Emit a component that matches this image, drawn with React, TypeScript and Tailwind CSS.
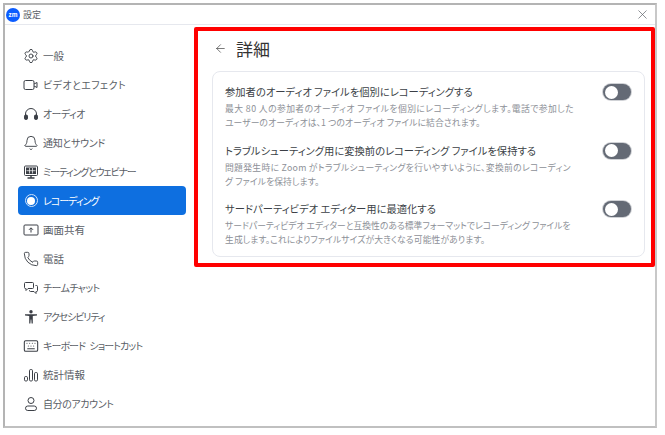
import React from "react";
import { Settings, Bell, Phone, Keyboard, X, ArrowLeft } from "lucide-react";

const I = ({ children }: { children: React.ReactNode }) => (
  <svg viewBox="0 0 16 16" width="16" height="16" fill="none" stroke="currentColor" strokeWidth="1">{children}</svg>
);

const items: [string, string, React.ReactNode][] = [
  ["一般", "text-[10.5px]", <Settings size={16} strokeWidth={1.4} />],
  ["ビデオとエフェクト", "tracking-[0.4px]", <I><rect x="1" y="3.5" width="10" height="9" rx="1.5" /><path d="M11 7l3-1.5v5L11 9" /></I>],
  ["オーディオ", "tracking-[-0.6px]", <I><path d="M2.5 11V8a5.5 5.5 0 0 1 11 0v3" /><rect x="1.5" y="9" width="3" height="4.5" rx="1.2" fill="currentColor" /><rect x="11.5" y="9" width="3" height="4.5" rx="1.2" fill="currentColor" /></I>],
  ["通知とサウンド", "tracking-[-0.3px]", <Bell size={16} strokeWidth={1.4} />],
  ["ミーティングとウェビナー", "tracking-[-1.2px]", <I><rect x="1.5" y="2" width="13" height="9.5" rx="1" /><rect x="3.5" y="4" width="9" height="5.5" fill="currentColor" /><path d="M8 11.5V14M4.5 14h7" strokeWidth="1.4" /><path d="M6.5 4v5.5M9.5 4v5.5M3.5 6.7h9" stroke="#fff" strokeWidth=".7" /></I>],
  ["レコーディング", "tracking-[-1px]", null],
  ["画面共有", "text-[10.5px]", <I><rect x="1" y="3" width="14" height="10" rx="1" /><path d="M8 10.5V6M6 7.8 8 5.8l2 2" /></I>],
  ["電話", "text-[10.5px]", <Phone size={16} strokeWidth={1.4} />],
  ["チームチャット", "tracking-[-0.6px]", <I><path d="M1.5 3.5a1 1 0 0 1 1-1h7a1 1 0 0 1 1 1v4a1 1 0 0 1-1 1H5l-2 2V8.5h-.5a1 1 0 0 1-1-1z" /><path d="M12.5 5.5h1a1 1 0 0 1 1 1v4a1 1 0 0 1-1 1H13v2l-2-2H7.5a1 1 0 0 1-1-1v-.5" /></I>],
  ["アクセシビリティ", "tracking-[-1.1px]", <svg viewBox="0 0 16 16" width="16" height="16" fill="currentColor"><circle cx="8" cy="2.8" r="1.7" /><path d="M2 5.2h12v1.3l-4.2.6v7.4H8.6l-.3-4h-.6l-.3 4H6.2V7.1L2 6.5z" /></svg>],
  ["キーボード ショートカット", "tracking-[-0.9px] [word-spacing:3px]", <Keyboard size={16} strokeWidth={1.6} />],
  ["統計情報", "text-[10.5px]", <I><rect x="1.5" y="9.5" width="3" height="4.5" rx="1.2" /><rect x="6.5" y="2.5" width="3" height="11.5" rx="1.2" /><rect x="11.5" y="5.5" width="3" height="8.5" rx="1.2" /></I>],
  ["自分のアカウント", "tracking-[-0.4px]", <I><circle cx="8" cy="4.5" r="3" /><rect x="2.5" y="10" width="11" height="4.5" rx="2.25" /></I>],
];

const rows = [
  { t: "参加者のオーディオ ファイルを個別にレコーディングする", a: "最大 80 人の参加者のオーディオ ファイルを個別にレコーディングします。電話で参加した", at: "tracking-[0.42px]", b: "ユーザーのオーディオは、1 つのオーディオ ファイルに結合されます。", bt: "tracking-[0.08px]" },
  { t: "トラブルシューティング用に変換前のレコーディング ファイルを保持する", a: "問題発生時に Zoom がトラブルシューティングを行いやすいように、変換前のレコーディン", at: "tracking-[0.3px]", b: "グ ファイルを保持します。", bt: "tracking-[0.1px]" },
  { t: "サードパーティビデオ エディター用に最適化する", a: "サードパーティビデオ エディターと互換性のある標準フォーマットでレコーディング ファイルを", at: "tracking-[0px]", b: "生成します。これによりファイルサイズが大きくなる可能性があります。", bt: "tracking-[0.1px]" },
];

export default function App() {
  return (
    <div className="w-[665px] h-[435px] bg-white pt-[3px] pl-[3px] overflow-hidden text-[#5a5e66] [font-feature-settings:'palt']" style={{ fontFamily: '"Noto Sans CJK JP", sans-serif' }}>
      <div className="w-[654px] h-[425px] border-2 border-[#b4b4b4] border-r-[#c8c8c8] border-b-[#c0c0c0] flex flex-col bg-white">
        <div className="h-[20px] shrink-0 border-b border-[#e6e8ee] flex items-center justify-between pl-[1px] pr-[5px]">
          <div className="flex items-center gap-[3px]">
            <div className="w-[14px] h-[14px] rounded-full bg-[#0b5cff] text-white text-[6px] font-bold flex items-center justify-center leading-none">zm</div>
            <span className="text-[9px] leading-none">設定</span>
          </div>
          <X size={15} strokeWidth={1.1} />
        </div>
        <div className="flex flex-1 min-h-0">
          <nav className="w-[189px] shrink-0 pt-[16px] pl-[13px] pr-[8px] flex flex-col">
            {items.map(([label, cls, icon]) => {
              const active = label === "レコーディング";
              return (
                <div key={label} className={`h-[29px] flex items-center gap-[4px] pl-[5px] rounded-[4px] text-[10px] ${active ? "bg-[#0e6fe0] text-white" : ""}`}>
                  <span className="w-[16px] h-[16px] flex items-center justify-center shrink-0 text-[#3b3f46]">
                    {active ? <span className="w-[13px] h-[13px] rounded-full border border-[#cfe2fb] p-[1.5px] flex"><span className="flex-1 rounded-full bg-white" /></span> : icon}
                  </span>
                  <span className={`whitespace-nowrap ${cls}`}>{label}</span>
                </div>
              );
            })}
          </nav>
          <main className="flex-1 pt-[2px]">
            <div className="w-[461px] h-[240px] border-4 border-[#ff0000] rounded-[2px] pt-[5px] pl-[14px] pr-[5px]">
              <div className="flex items-center h-[24px] gap-[9px] pl-[2px] text-[#333]">
                <ArrowLeft size={13} strokeWidth={1.2} />
                <h1 className="text-[17px] font-normal leading-none">詳細</h1>
              </div>
              <div className="mt-[11px] w-[433px] h-[186px] border border-[#e6e8ee] rounded-[8px] pl-[12px] pr-[13px] pt-[10px] flex flex-col gap-[11.5px]">
                {rows.map((r) => (
                  <div key={r.t} className="flex justify-between h-[47px]">
                    <div className="whitespace-nowrap">
                      <div className="text-[10.3px] leading-[20px] text-[#3b3f46]">{r.t}</div>
                      <div className={`text-[8.8px] leading-[14px] text-[#8d9097] ${r.at}`}>{r.a}</div>
                      <div className={`text-[8.8px] leading-[14px] text-[#8d9097] ${r.bt}`}>{r.b}</div>
                    </div>
                    <div className="w-[28px] h-[16px] mt-[2px] rounded-full bg-[#646a75] p-[1.5px] shrink-0 shadow-[0_0_0_1px_#d0d2d6]">
                      <div className="w-[13px] h-[13px] rounded-full bg-white" />
                    </div>
                  </div>
                ))}
              </div>
            </div>
          </main>
        </div>
      </div>
    </div>
  );
}
